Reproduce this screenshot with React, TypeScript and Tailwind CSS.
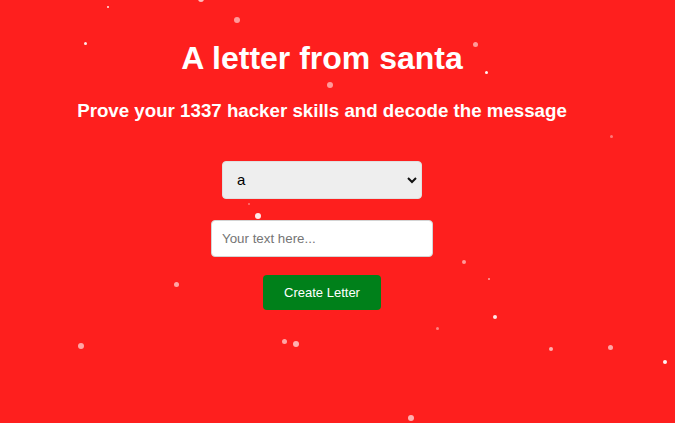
import React from "react";

const flakes: [number, number, number, number][] = [
  [108, 7, 2, 0.9],
  [201, -1, 6, 0.7],
  [237, 20, 6, 0.55],
  [85, 43, 3, 0.9],
  [475, 44, 5, 0.55],
  [486, 72, 3, 0.95],
  [330, 85, 6, 0.55],
  [611, 136, 3, 0.4],
  [249, 204, 2, 0.4],
  [258, 216, 6, 0.9],
  [464, 262, 4, 0.55],
  [489, 279, 2, 0.6],
  [176, 284, 5, 0.6],
  [495, 317, 4, 0.9],
  [437, 328, 3, 0.45],
  [81, 346, 6, 0.6],
  [284, 341, 5, 0.6],
  [296, 344, 6, 0.65],
  [551, 349, 4, 0.65],
  [610, 347, 5, 0.6],
  [665, 362, 4, 0.95],
  [411, 418, 6, 0.65],
];

export default function App() {
  return (
    <div
      className="relative min-h-screen w-full overflow-hidden bg-[#fe1f1e]"
      style={{ fontFamily: '"Liberation Sans", Arial, sans-serif' }}
    >
      <div className="flex w-[644px] flex-col items-center text-center">
        <h1 className="mt-[40px] text-[32px] font-bold leading-[37px] text-white">
          A letter from santa
        </h1>
        <h3 className="mt-[23px] text-[18.72px] font-bold leading-[22px] text-white">
          Prove your 1337 hacker skills and decode the message
        </h3>
        <div className="relative mt-[39px] h-[38px] w-[200px]">
          <select className="h-full w-full appearance-none rounded-[4px] border border-[#e0e0e0] bg-[#eeeeee] pl-[14px] text-[15px] text-black outline-none">
            <option>a</option>
            <option>b</option>
            <option>c</option>
          </select>
          <svg
            className="pointer-events-none absolute right-[5px] top-[16px]"
            width="10"
            height="7"
            viewBox="0 0 10 7"
          >
            <path d="M1 1 L5 5 L9 1" fill="none" stroke="#111" strokeWidth="2" />
          </svg>
        </div>
        <input
          type="text"
          placeholder="Your text here..."
          className="mt-[21px] h-[37px] w-[222px] rounded-[4px] border border-[#d4d4d4] bg-white px-[10px] text-[13.33px] text-black outline-none placeholder:text-[#757575]"
        />
        <button className="mt-[18px] h-[35px] w-[118px] rounded-[4px] bg-[#00801a] text-[13px] text-white">
          Create Letter
        </button>
      </div>
      {flakes.map(([x, y, s, o], i) => (
        <span
          key={i}
          className="absolute rounded-full bg-white"
          style={{ left: x - s / 2, top: y - s / 2, width: s, height: s, opacity: o }}
        />
      ))}
    </div>
  );
}
